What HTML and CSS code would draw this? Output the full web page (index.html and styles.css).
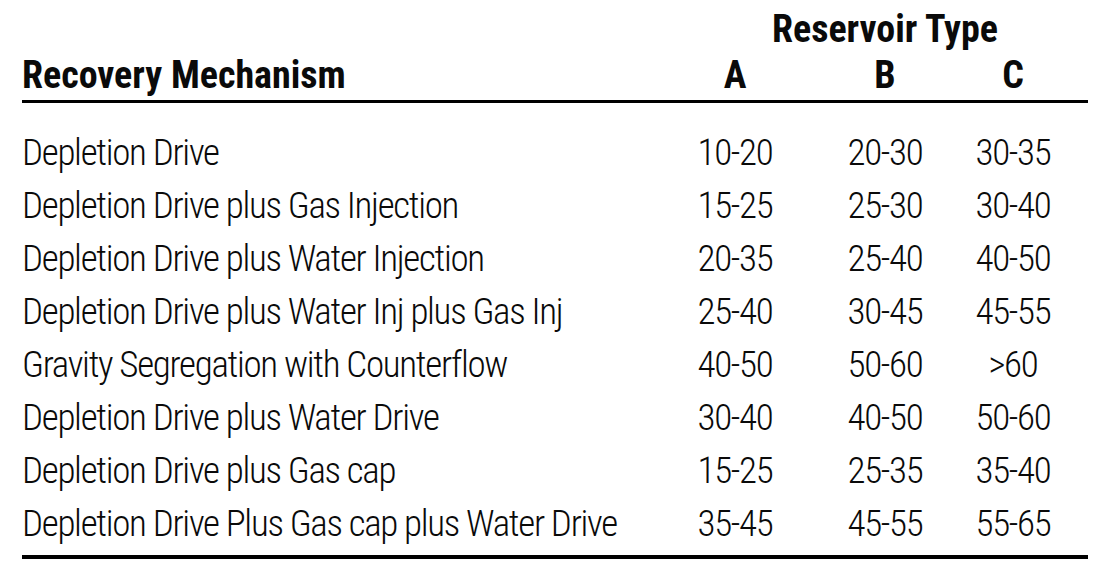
FILE: index.html
```html
<!DOCTYPE html>
<html lang="en">
<head>
<meta charset="utf-8">
<title>Recovery Mechanism by Reservoir Type</title>
<link rel="stylesheet" href="styles.css">
</head>
<body>
<div class="table">
  <div class="head">
    <div class="group-row">
      <span class="cell"></span>
      <span class="group">Reservoir Type</span>
    </div>
    <div class="row head-row">
      <span class="cell label">Recovery Mechanism</span>
      <span class="cell">A</span>
      <span class="cell">B</span>
      <span class="cell">C</span>
    </div>
  </div>
  <div class="rule top"></div>
  <div class="body">
    <div class="row"><span class="cell label">Depletion Drive</span><span class="cell">10-20</span><span class="cell">20-30</span><span class="cell">30-35</span></div>
    <div class="row"><span class="cell label">Depletion Drive plus Gas Injection</span><span class="cell">15-25</span><span class="cell">25-30</span><span class="cell">30-40</span></div>
    <div class="row"><span class="cell label">Depletion Drive plus Water Injection</span><span class="cell">20-35</span><span class="cell">25-40</span><span class="cell">40-50</span></div>
    <div class="row"><span class="cell label">Depletion Drive plus Water Inj plus Gas Inj</span><span class="cell">25-40</span><span class="cell">30-45</span><span class="cell">45-55</span></div>
    <div class="row"><span class="cell label">Gravity Segregation with Counterflow</span><span class="cell">40-50</span><span class="cell">50-60</span><span class="cell">&gt;60</span></div>
    <div class="row"><span class="cell label">Depletion Drive plus Water Drive</span><span class="cell">30-40</span><span class="cell">40-50</span><span class="cell">50-60</span></div>
    <div class="row"><span class="cell label">Depletion Drive plus Gas cap</span><span class="cell">15-25</span><span class="cell">25-35</span><span class="cell">35-40</span></div>
    <div class="row"><span class="cell label">Depletion Drive Plus Gas cap plus Water Drive</span><span class="cell">35-45</span><span class="cell">45-55</span><span class="cell">55-65</span></div>
  </div>
  <div class="rule bottom"></div>
</div>
</body>
</html>
```
FILE: styles.css
```css
html, body {
  margin: 0;
  padding: 0;
  background: #ffffff;
}
body {
  font-family: "Roboto Condensed", "Roboto", "Liberation Sans", sans-serif;
  font-stretch: 75%;
  color: #0a0a0a;
}
.table {
  width: 1066px;
  margin-left: 22px;
  padding-top: 6px;
}
.head {
  font-weight: 700;
  font-size: 38px;
  line-height: 46px;
}
.group-row,
.row {
  display: grid;
  grid-template-columns: 638px 150px 150px 106px;
}
.group {
  grid-column: 3;
  justify-self: center;
  text-align: center;
  white-space: nowrap;
}
.cell {
  text-align: center;
  white-space: nowrap;
}
.cell.label {
  text-align: left;
}
.rule {
  background: #000000;
}
.rule.top {
  height: 3px;
  margin-top: 2px;
}
.body {
  margin-top: 23px;
  font-size: 37px;
  font-weight: 300;
  line-height: 53px;
  letter-spacing: -1.3px;
}
.rule.bottom {
  height: 4px;
  margin-top: 5px;
}
```
